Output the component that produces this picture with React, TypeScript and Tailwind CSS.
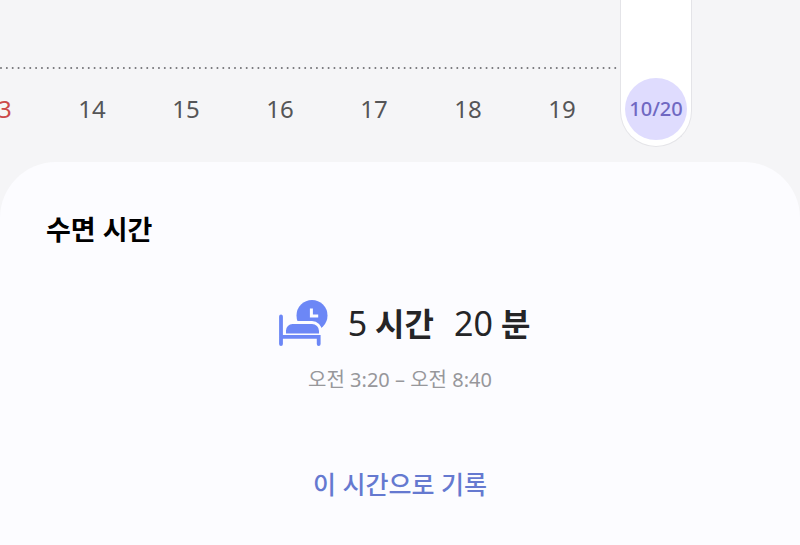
interface Day {
  label: string;
  holiday?: boolean;
  selected?: boolean;
}

const days: Day[] = [
  { label: "13", holiday: true },
  { label: "14" },
  { label: "15" },
  { label: "16" },
  { label: "17" },
  { label: "18" },
  { label: "19" },
  { label: "10/20", selected: true },
];

function DayColumn({ label, holiday, selected }: Day) {
  if (selected) {
    return (
      <div className="flex w-[94px] shrink-0 justify-center">
        <div className="flex w-[72px] flex-col items-center justify-end rounded-b-full border border-t-0 border-[#e4e4e8] bg-white pb-[6px]">
          <button
            type="button"
            aria-pressed="true"
            className="flex size-[62px] items-center justify-center rounded-full bg-[#dfdcfe] text-xl leading-none font-medium text-[#7068c2]"
          >
            {label}
          </button>
        </div>
      </div>
    );
  }

  return (
    <div className="flex w-[94px] shrink-0 flex-col items-center justify-end pb-[7px]">
      <button
        type="button"
        className={`size-[62px] text-2xl leading-none ${holiday ? "text-[#cc4a4a]" : "text-[#555557]"}`}
      >
        {label}
      </button>
    </div>
  );
}

function Amount({ value, unit }: { value: number; unit: string }) {
  return (
    <span className="flex items-baseline gap-2">
      <span className="text-[34px] font-normal">{value}</span>
      <span>{unit}</span>
    </span>
  );
}

function SleepIcon() {
  return (
    <svg viewBox="0 0 50 48" className="h-12 w-[50px] shrink-0" aria-hidden="true">
      <circle cx="34" cy="15.5" r="15.5" fill="#6c87f6" />
      <path d="M33.4 8.5v7.6h6.8" fill="none" stroke="#fcfcff" strokeWidth="3" />
      <path
        d="M6.5 35V30.5a8 8 0 0 1 8-8h19.5a8.5 8.5 0 0 1 8.5 8.5V35Z"
        fill="#6c87f6"
        stroke="#fcfcff"
        strokeWidth="3"
      />
      <path
        d="M3 16.5v27.5M3 36.8h37.7V44"
        fill="none"
        stroke="#6c87f6"
        strokeWidth="3.8"
        strokeLinecap="round"
      />
    </svg>
  );
}

export default function App() {
  return (
    <div className="flex min-h-screen flex-col bg-[#f5f5f7] font-['Noto_Sans','Noto_Sans_CJK_KR',sans-serif]">
      <nav className="relative overflow-hidden pb-[15px]">
        <svg className="absolute top-[67px] left-0 h-[2px] w-[calc(100%-179px)]" aria-hidden="true">
          <line x1="1" y1="1" x2="100%" y2="1" stroke="#737377" strokeWidth="2" strokeDasharray="0 5.85" strokeLinecap="round" />
        </svg>
        <div className="relative flex h-[147px] justify-end pr-[97px]">
          {days.map((day) => (
            <DayColumn key={day.label} {...day} />
          ))}
        </div>
      </nav>

      <main className="flex-1 rounded-t-[56px] bg-[#fcfcff] px-[46px] pt-12 pb-10">
        <h1 className="text-[27px] leading-10 font-bold text-black">수면 시간</h1>

        <section className="mt-[49px] flex flex-col items-center">
          <div className="flex items-center pl-2">
            <SleepIcon />
            <p className="ml-5 flex gap-5 text-[32px] leading-12 font-bold text-[#252527]">
              <Amount value={5} unit="시간" />
              <Amount value={20} unit="분" />
            </p>
          </div>
          <p className="mt-4 text-xl leading-8 text-[#97979b]">오전 3:20 – 오전 8:40</p>
        </section>

        <div className="mt-[68px] flex justify-center">
          <button type="button" className="text-[25px] leading-10 font-medium text-[#6579d0]">
            이 시간으로 기록
          </button>
        </div>
      </main>
    </div>
  );
}
